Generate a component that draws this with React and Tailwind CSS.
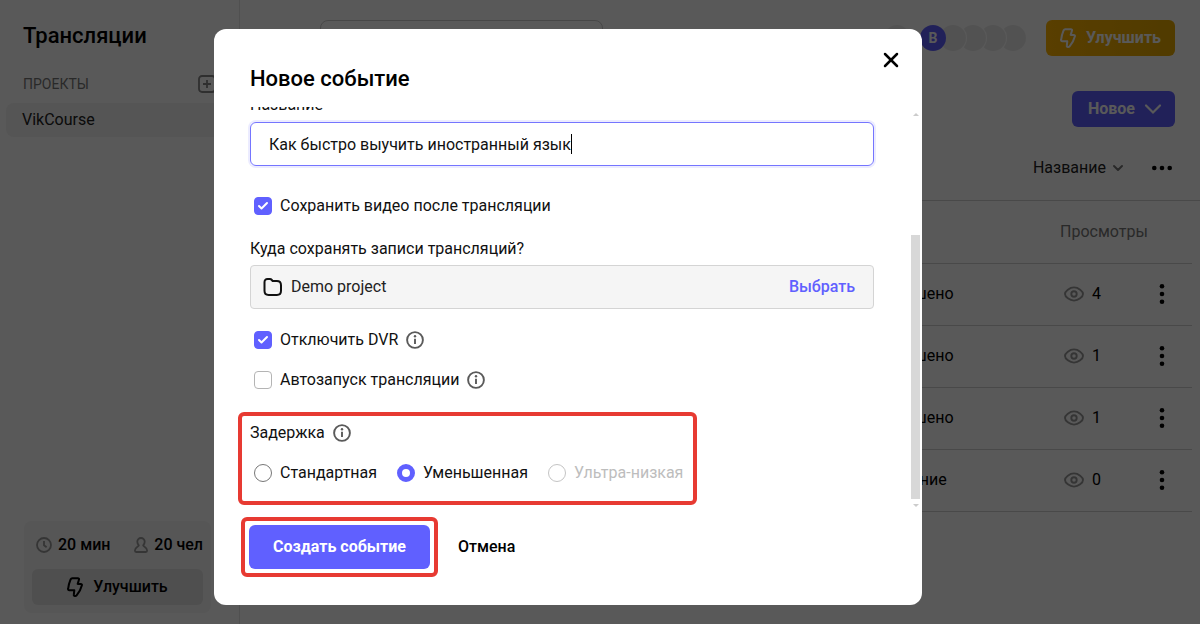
import { useState } from 'react';
import { Check, ChevronDown, X } from 'lucide-react';

const events = [
  { id: 1, status: 'Завершено', views: 4 },
  { id: 2, status: 'Завершено', views: 1 },
  { id: 3, status: 'Завершено', views: 1 },
  { id: 4, status: 'Ожидание', views: 0 },
];

const delays = [
  { value: 'standard', label: 'Стандартная' },
  { value: 'reduced', label: 'Уменьшенная' },
  { value: 'ultra', label: 'Ультра-низкая', disabled: true },
];

function BoltIcon() {
  return (
    <svg width="16" height="20" viewBox="0 0 16 20" fill="none" stroke="currentColor" strokeWidth="2" strokeLinejoin="round">
      <path d="M5.200 1.200h5.700c.8 0 1.300.6 1.100 1.300L10.700 6.900h3.100c.8 0 1.300.6 1.100 1.300-.9 3.800-2.800 7.100-5.300 10.100-.4.500-1.100.7-1.800.6-.7 0-1.100-.5-1-1.200l.5-4.400H2.300c-.8 0-1.300-.6-1.200-1.300.4-3.400 1.200-6.600 2.600-9.800.3-.6.8-1 1.500-1z" />
    </svg>
  );
}

function InfoIcon() {
  return (
    <svg width="18" height="18" viewBox="0 0 18 18" fill="none" className="text-[#5a5a5a] shrink-0">
      <circle cx="9" cy="9" r="7.900" stroke="currentColor" strokeWidth="1.900" />
      <path d="M9 7.700v5.300" stroke="currentColor" strokeWidth="1.900" />
      <circle cx="9" cy="5.300" r="1.200" fill="currentColor" />
    </svg>
  );
}

function FolderIcon() {
  return (
    <svg width="20" height="20" viewBox="0 0 20 20" fill="none" stroke="currentColor" strokeWidth="2" strokeLinejoin="round">
      <path d="M1.500 5.300c0-2.100 1-3.200 3.100-3.200h2.300c.8 0 1.400.3 1.900.9l.9 1.100h4.200c2.800 0 4.100 1.400 4.100 4.200v5.400c0 2.800-1.300 4.200-4.100 4.200H5.600c-2.800 0-4.100-1.400-4.100-4.200z" />
    </svg>
  );
}

function EyeIcon() {
  return (
    <svg width="20" height="16" viewBox="0 0 20 16" fill="none" stroke="currentColor" strokeWidth="1.900">
      <path d="M1 8c0-2.800 4.600-6.600 9-6.600S19 5.200 19 8s-4.600 6.600-9 6.600S1 10.800 1 8z" strokeLinejoin="round" />
      <circle cx="10" cy="8" r="2.700" />
    </svg>
  );
}

function DotsIcon({ vertical }) {
  return vertical ? (
    <svg width="6" height="20" viewBox="0 0 6 20" fill="currentColor">
      <circle cx="3" cy="2.300" r="2.300" /><circle cx="3" cy="10" r="2.300" /><circle cx="3" cy="17.700" r="2.300" />
    </svg>
  ) : (
    <svg width="20" height="6" viewBox="0 0 20 6" fill="currentColor">
      <circle cx="2.300" cy="3" r="2.300" /><circle cx="10" cy="3" r="2.300" /><circle cx="17.700" cy="3" r="2.300" />
    </svg>
  );
}

function Checkbox({ label, info, defaultChecked }) {
  return (
    <div className="flex items-center gap-2 h-5 pl-1">
      <label className="flex items-center gap-2 cursor-pointer">
        <span className="grid place-items-center">
          <input
            type="checkbox"
            defaultChecked={defaultChecked}
            className="peer col-start-1 row-start-1 appearance-none size-[18px] rounded border border-[#b4b4b4] bg-white checked:bg-[#6060ff] checked:border-[#6060ff]"
          />
          <Check size={12} strokeWidth={4} className="col-start-1 row-start-1 text-white opacity-0 peer-checked:opacity-100 pointer-events-none" />
        </span>
        {label}
      </label>
      {info && <InfoIcon />}
    </div>
  );
}

function Sidebar() {
  return (
    <aside className="w-60 shrink-0 border-r border-[#e4e4e4] flex flex-col justify-between pb-[11px]">
      <div>
        <h1 className="px-[23px] pt-5 text-[22px] leading-8 font-medium">Трансляции</h1>
        <div className="flex items-center justify-between px-[23px] mt-[22px] h-5">
          <h2 className="text-sm text-[#777]">ПРОЕКТЫ</h2>
          <button aria-label="Добавить проект" className="text-[#888]">
            <svg width="18" height="18" viewBox="0 0 18 18" fill="none" stroke="currentColor" strokeWidth="1.800">
              <rect x="1" y="1" width="16" height="16" rx="3" />
              <path d="M9 5v8M5 9h8" />
            </svg>
          </button>
        </div>
        <a href="#" className="block ml-1.5 mr-2 mt-[9px] px-4 rounded-lg bg-[#f2f2f2] leading-[34px] text-[#222]">VikCourse</a>
      </div>
      <div className="ml-6 mr-7 p-2 rounded-lg bg-[#f5f5f5]">
        <div className="flex justify-between pl-1 h-8 items-center font-medium">
          <span className="flex items-center gap-1.5">
            <svg width="16" height="16" viewBox="0 0 16 16" fill="none" stroke="#999" strokeWidth="1.800">
              <circle cx="8" cy="8" r="7" /><path d="M8 4v4.200l2.600 2" />
            </svg>
            20 мин
          </span>
          <span className="flex items-center gap-1.5">
            <svg width="14" height="16" viewBox="0 0 14 16" fill="none" stroke="#999" strokeWidth="1.800" strokeLinejoin="round">
              <path d="M7 1a3.700 3.700 0 0 0-3.700 3.800c0 1.600.7 2.700 1.500 3.600-.4 1.400-3.900 1.700-3.900 5.200 0 .8.400 1.400 1.200 1.400h9.800c.8 0 1.200-.6 1.200-1.400 0-3.500-3.500-3.800-3.900-5.200.8-.9 1.500-2 1.500-3.600A3.700 3.700 0 0 0 7 1z" />
            </svg>
            20 чел
          </span>
        </div>
        <button className="mt-2 w-full h-9 rounded-md bg-[#e2e2e2] flex items-center justify-center gap-2.5 font-medium">
          <BoltIcon /> Улучшить
        </button>
      </div>
    </aside>
  );
}

function EventsPage() {
  return (
    <main className="flex-1 min-w-0">
      <div className="flex items-center justify-between pl-20 pr-[25px] pt-5">
        <input type="search" aria-label="Поиск" className="w-[283px] h-9 rounded-lg border border-[#ccc] px-3" />
        <div className="flex items-center">
          <span className="size-[26px] rounded-full bg-[#eee] mr-2.5" />
          <div className="isolate flex -space-x-1.5 mr-5">
            <span className="relative z-40 size-[26px] rounded-full bg-[#6060ff] text-white text-sm font-bold grid place-items-center">B</span>
            <span className="relative z-30 size-[26px] rounded-full bg-[#ececec] ring-1 ring-white" />
            <span className="relative z-20 size-[26px] rounded-full bg-[#ececec] ring-1 ring-white" />
            <span className="relative z-10 size-[26px] rounded-full bg-[#ececec] ring-1 ring-white" />
            <span className="relative z-0 size-[26px] rounded-full bg-[#ececec]" />
          </div>
          <button className="h-9 px-3.5 rounded-md bg-linear-to-r from-[#ffb400] to-[#e6a800] text-white font-bold flex items-center gap-2.5">
            <BoltIcon /> Улучшить
          </button>
        </div>
      </div>

      <div className="flex justify-end pr-[25px] mt-[35px]">
        <button className="h-9 pl-4 pr-3 rounded-md bg-[#6060ff] text-white font-bold flex items-center gap-2">
          Новое
          <svg width="20" height="12" viewBox="0 0 20 12" fill="none" stroke="currentColor" strokeWidth="2.200" strokeLinecap="round">
            <path d="M3 2.500l7 7 7-7" />
          </svg>
        </button>
      </div>

      <div className="flex justify-end items-center gap-[26px] pr-7 mt-6 h-[34px] text-[#222]">
        <button className="flex items-center gap-1">
          Название <ChevronDown size={16} strokeWidth={3} className="text-[#777]" />
        </button>
        <button aria-label="Ещё" className="text-black"><DotsIcon /></button>
      </div>

      <div className="mt-[15px] border-t border-[#d2d2d2] pl-8 pr-2">
        <table className="w-full table-fixed">
          <thead>
            <tr className="h-[62px] border-b border-[#d2d2d2] text-[#777] text-left">
              <th aria-label="Превью" />
              <th className="w-[191px]" aria-label="Статус" />
              <th className="font-normal w-[93px]">Просмотры</th>
              <th className="w-[39px]" aria-label="Действия" />
            </tr>
          </thead>
          <tbody>
            {events.map((event) => (
              <tr key={event.id} className="h-[62px] border-b border-[#d2d2d2]">
                <td><span className="block w-16 h-9 rounded bg-[#e6e6e6]" /></td>
                <td>{event.status}</td>
                <td>
                  <span className="flex items-center gap-2 pl-1">
                    <span className="text-[#999]"><EyeIcon /></span>
                    {event.views}
                  </span>
                </td>
                <td>
                  <button aria-label="Меню события" className="block ml-1.5"><DotsIcon vertical /></button>
                </td>
              </tr>
            ))}
          </tbody>
        </table>
      </div>
    </main>
  );
}

function NewEventModal() {
  const [title, setTitle] = useState('Как быстро выучить иностранный язык');
  const [delay, setDelay] = useState('reduced');

  return (
    <div className="fixed inset-0 bg-black/65 flex items-start justify-center pt-[29px] pr-16">
      <form role="dialog" aria-labelledby="modal-title" className="relative w-full max-w-[708px] bg-white rounded-xl pb-7" onSubmit={(e) => e.preventDefault()}>
        <button type="button" aria-label="Закрыть" className="absolute top-[19px] right-[19px]">
          <X size={24} strokeWidth={2.5} />
        </button>
        <h2 id="modal-title" className="px-9 pt-9 pb-[14px] text-[22px] leading-7 font-medium">Новое событие</h2>

        <div className="relative overflow-hidden px-9 pb-1 text-[#111]">
          <label htmlFor="event-title" className="block -mt-3 leading-5">Название</label>
          <div className="relative mt-[7px] mr-3">
            <input
              id="event-title"
              value={title}
              onChange={(e) => setTitle(e.target.value)}
              className="block w-full h-11 px-[18px] rounded-md border border-[#7575ff] ring-2 ring-[#ececff] outline-none"
            />
            <span className="absolute left-[321px] top-3 w-px h-5 bg-black" />
          </div>

          <div className="mt-[30px]">
            <Checkbox label="Сохранить видео после трансляции" defaultChecked />
          </div>

          <p className="mt-[23px] leading-5">Куда сохранять записи трансляций?</p>
          <div className="mt-1.5 mr-3 h-11 pl-3 pr-[18px] flex items-center gap-2 rounded border border-[#d4d4d4] bg-[#f5f5f5]">
            <FolderIcon />
            <span className="flex-1 text-[#222]">Demo project</span>
            <button type="button" className="font-medium text-[#6060ff]">Выбрать</button>
          </div>

          <div className="mt-[21px] space-y-5">
            <Checkbox label="Отключить DVR" info defaultChecked />
            <Checkbox label="Автозапуск трансляции" info />
          </div>

          <fieldset className="mt-[22px] -ml-3 w-fit border-4 border-[#e73a32] rounded-md pl-2 pr-1.5 pt-[7px] pb-[18px]">
            <div className="flex items-center gap-2 h-5">
              <span id="delay-label">Задержка</span>
              <InfoIcon />
            </div>
            <div role="radiogroup" aria-labelledby="delay-label" className="mt-5 h-5 flex items-center gap-5 px-1">
              {delays.map((item) => (
                <label key={item.value} className={`flex items-center gap-2 ${item.disabled ? 'text-[#bdbdbd]' : ''}`}>
                  <input
                    type="radio"
                    name="delay"
                    value={item.value}
                    checked={delay === item.value}
                    disabled={item.disabled}
                    onChange={() => setDelay(item.value)}
                    className="appearance-none size-[18px] rounded-full border border-[#777] checked:border-[5px] checked:border-[#6060ff] disabled:border-[#c4c4c4]"
                  />
                  {item.label}
                </label>
              ))}
            </div>
          </fieldset>

          {/* scrollbar */}
          <div className="absolute top-0 bottom-0 right-0.5 w-[9px] flex flex-col items-center justify-end gap-[5px]">
            <span className="absolute top-1.5 border-x-3 border-b-3 border-x-transparent border-b-[#ccc]" />
            <span className="w-full h-[264px] bg-[#d8d8d8]" />
            <span className="border-x-3 border-t-3 border-x-transparent border-t-[#ccc] mb-0.5" />
          </div>
        </div>

        <div className="flex items-center gap-5 pl-[27px] mt-2">
          <div className="border-4 border-[#e73a32] rounded-md p-1">
            <button type="submit" className="h-11 px-6 rounded-md bg-[#6060ff] text-white font-bold">Создать событие</button>
          </div>
          <button type="button" className="font-medium">Отмена</button>
        </div>
      </form>
    </div>
  );
}

export default function App() {
  return (
    <div className="min-h-screen flex bg-white text-black text-base font-[Roboto,sans-serif]">
      <Sidebar />
      <EventsPage />
      <NewEventModal />
    </div>
  );
}
